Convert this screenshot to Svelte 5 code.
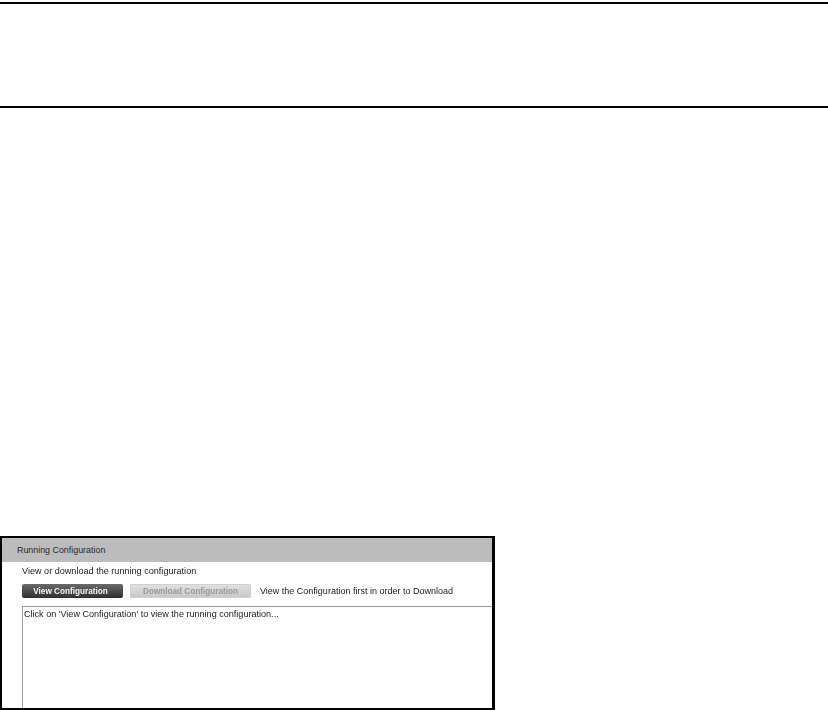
<script>
  const title = 'Running Configuration';
</script>

<div class="page">
  <div class="band"></div>
  <section class="panel">
    <header class="head">{title}</header>
    <div class="body">
      <p class="intro">View or download the running configuration</p>
      <div class="actions">
        <button class="btn primary" type="button"><span class="soft">View Configuration</span></button>
        <button class="btn disabled" type="button" disabled><span class="soft">Download Configuration</span></button>
        <span class="hint">View the Configuration first in order to Download</span>
      </div>
      <div class="output"><span class="soft">Click on 'View Configuration' to view the running configuration...</span></div>
    </div>
  </section>
</div>

<style>
  :global(body) {
    margin: 0;
    background: #fff;
  }
  .page {
    width: 828px;
    height: 710px;
    overflow: hidden;
    padding-top: 2px;
    box-sizing: border-box;
    font-family: "Liberation Sans", Arial, sans-serif;
    color: #222;
  }
  .band {
    height: 102px;
    border-top: 2px solid #000;
    border-bottom: 2px solid #000;
  }
  .panel {
    margin-top: 428px;
    width: 495px;
    height: 174px;
    box-sizing: border-box;
    border: 2px solid #000;
    border-right-width: 3px;
    display: flex;
    flex-direction: column;
    overflow: hidden;
  }
  .head {
    height: 24px;
    flex: none;
    background: #bcbcbc;
    font-size: 8.9px;
    line-height: 25px;
    padding-left: 15px;
    color: #2a2a2a;
  }
  .body {
    flex: 1;
    display: flex;
    flex-direction: column;
    padding: 0 0 0 20px;
    min-height: 0;
  }
  .intro {
    margin: 0;
    height: 22px;
    font-size: 9.1px;
    line-height: 18px;
    color: #222;
    filter: blur(0.3px);
  }
  .actions {
    display: flex;
    align-items: center;
    height: 14px;
  }
  .btn {
    height: 14px;
    padding: 1px 0 0;
    border-radius: 2px;
    font-family: inherit;
    font-size: 8.2px;
    font-weight: bold;
    line-height: 13px;
    border: 0;
  }
  .primary {
    width: 101px;
    padding-right: 4px;
    background: linear-gradient(#6a6a6a, #303030);
    color: #f4f4f4;
  }
  .disabled {
    width: 121px;
    margin-left: 7px;
    background: linear-gradient(#e2e2e2, #c6c6c6);
    color: #9a9a9a;
    box-shadow: inset 0 0 0 1px #d0d0d0;
  }
  .hint {
    margin-left: 9px;
    font-size: 9px;
    color: #222;
    filter: blur(0.3px);
  }
  .output {
    margin-top: 8px;
    flex: 1;
    border-top: 1px solid #999;
    border-left: 1px solid #999;
    padding: 1px 0 0 1px;
    font-size: 9.07px;
    line-height: 12px;
    color: #222;
  }
  .soft {
    display: inline-block;
    filter: blur(0.3px);
  }
</style>
